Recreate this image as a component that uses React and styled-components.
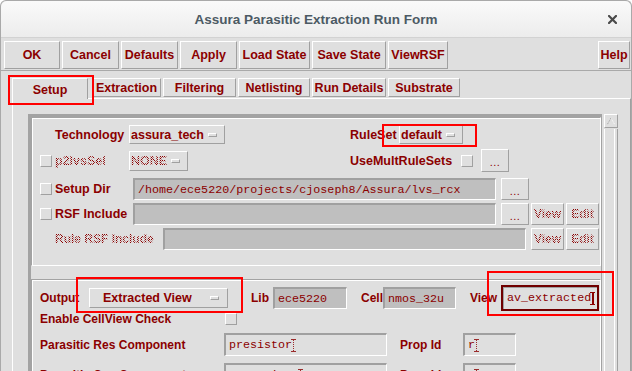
import styled, { createGlobalStyle, css } from "styled-components";

const RED = "#8b0000";
const BG = "#dfdfdf";
const SHADE = "#a0a0a0";

const GlobalStyle = createGlobalStyle`
  html, body { margin: 0; background: #ffffff; }
  body { font-family: "Liberation Sans", Arial, sans-serif; }
`;

const raised = css`
  border: 1px solid;
  border-color: #ffffff ${SHADE} ${SHADE} #ffffff;
`;

const sunken = css`
  border-style: solid;
  border-width: 2px 1px 1px 2px;
  border-color: ${SHADE} #ffffff #ffffff ${SHADE};
`;

const dither = css`
  color: transparent;
  background: repeating-conic-gradient(${RED} 0 25%, transparent 0 50%) 0 0 / 2px 2px;
  -webkit-background-clip: text;
  background-clip: text;
`;

const Window = styled.div`
  width: 632px;
  height: 371px;
  box-sizing: border-box;
  border: 1px solid #a9a9a9;
  border-bottom: none;
  border-radius: 6px 6px 0 0;
  background: ${BG};
  overflow: hidden;
  display: flex;
  flex-direction: column;
`;

const TitleBar = styled.div`
  height: 36px;
  flex: none;
  display: grid;
  grid-template-columns: 1fr auto 1fr;
  align-items: center;
  background: linear-gradient(#fafafa, #ececec);
  border-bottom: 1px solid #d2d2d2;
  border-radius: 6px 6px 0 0;
`;

const Title = styled.div`
  grid-column: 2;
  font-size: 13.5px;
  font-weight: bold;
  color: #4c5a64;
  white-space: nowrap;
`;

const Close = styled.div`
  grid-column: 3;
  justify-self: end;
  margin-right: 14px;
  display: flex;
`;

const Toolbar = styled.div`
  flex: none;
  display: flex;
  gap: 2px;
  padding: 3px 1px 1px 3px;
  border-bottom: 1px solid #a9a9a9;
`;

const ToolButton = styled.div`
  ${raised};
  box-sizing: border-box;
  width: ${(p) => p.$w}px;
  height: 28px;
  margin-left: ${(p) => (p.$push ? "auto" : "0")};
  display: flex;
  align-items: center;
  justify-content: center;
  font-size: 12.5px;
  font-weight: bold;
  color: ${RED};
  white-space: nowrap;
`;

const TabStrip = styled.div`
  flex: none;
  height: 27px;
  box-sizing: border-box;
  display: flex;
  align-items: flex-end;
  gap: 2px;
  padding: 7px 0 0 11px;
`;

const Tab = styled.div`
  ${raised};
  position: relative;
  box-sizing: border-box;
  width: ${(p) => p.$w}px;
  height: ${(p) => (p.$active ? 21 : 19)}px;
  margin-bottom: ${(p) => (p.$active ? -1 : 1)}px;
  margin-right: ${(p) => (p.$active ? 2 : 0)}px;
  ${(p) =>
    p.$active &&
    css`
      border-bottom: none;
      background: ${BG};
      z-index: 1;
      padding-top: 1px;
    `}
  display: flex;
  align-items: center;
  justify-content: center;
  font-size: 12.5px;
  font-weight: bold;
  color: ${RED};
  white-space: nowrap;
`;

const Annot = styled.span`
  position: absolute;
  left: ${(p) => p.$x}px;
  top: ${(p) => p.$y}px;
  width: ${(p) => p.$w}px;
  height: ${(p) => p.$h}px;
  box-sizing: border-box;
  border: 2px solid #ff0000;
  pointer-events: none;
  z-index: 5;
`;

const TabPage = styled.div`
  flex: 1;
  min-height: 0;
  display: flex;
  align-items: stretch;
  margin-left: 11px;
  border-top: 1px solid #ffffff;
  border-left: 1px solid #ffffff;
  border-right: 1px solid ${SHADE};
  padding: 15px 0 0 15px;
`;

const ScrollFrame = styled.div`
  width: 574px;
  flex: none;
  box-sizing: border-box;
  border-style: solid;
  border-width: 3px 1px 0 3px;
  border-color: #a3a3a3;
`;

const Scrollbar = styled.div`
  width: 14px;
  flex: none;
  margin-left: 2px;
  display: flex;
  flex-direction: column;
`;

const ArrowBox = styled.div`
  ${raised};
  height: 14px;
  box-sizing: border-box;
  display: flex;
  align-items: center;
  justify-content: center;
`;

const Trough = styled.div`
  flex: 1;
  margin-top: 1px;
  border-left: 1px solid #ffffff;
  border-right: 1px solid ${SHADE};
  box-shadow: inset -2px 0 0 ${BG}, inset -3px 0 0 #ffffff;
`;

const Group = styled.div`
  border: 1px solid;
  border-color: #a3a3a3 #ffffff #ffffff #a3a3a3;
  box-shadow: inset 1px 1px 0 #ffffff;
  margin-top: ${(p) => p.$top || 0}px;
  padding: ${(p) => p.$pt}px 0 ${(p) => p.$pb}px 8px;
`;

const Row = styled.div`
  display: flex;
  align-items: center;
  height: ${(p) => p.$h}px;
  margin-top: ${(p) => p.$mt || 0}px;
`;

const Half = styled.div`
  width: 310px;
  flex: none;
  display: flex;
  align-items: center;
`;

const Check = styled.span`
  ${raised};
  width: 12px;
  height: 12px;
  box-sizing: border-box;
  flex: none;
  margin-right: ${(p) => (p.$mr === undefined ? 3 : p.$mr)}px;
  visibility: ${(p) => (p.$hidden ? "hidden" : "visible")};
`;

const Label = styled.span`
  width: ${(p) => p.$w}px;
  flex: none;
  font-size: ${(p) => p.$size || 12.5}px;
  font-weight: bold;
  color: ${RED};
  white-space: nowrap;
  ${(p) => p.$dim && dither};
`;

const Combo = styled.span`
  ${raised};
  position: relative;
  display: inline-flex;
  align-items: center;
  box-sizing: border-box;
  flex: none;
  height: ${(p) => p.$h || 19}px;
  width: ${(p) => (p.$w ? `${p.$w}px` : "auto")};
  padding: ${(p) => (p.$w ? "0 8px 0 13px" : "0 7px 0 1px")};
  gap: 4px;
  justify-content: ${(p) => (p.$w ? "space-between" : "flex-start")};
  font-size: 12.5px;
  font-weight: bold;
  color: ${RED};
  white-space: nowrap;
`;

const ComboText = styled.span`
  ${(p) => p.$dim && dither};
`;

const ComboMark = styled.span`
  ${raised};
  width: 9px;
  height: 4px;
  box-sizing: border-box;
  flex: none;
`;

const Field = styled.span`
  ${sunken};
  position: relative;
  display: flex;
  align-items: center;
  box-sizing: border-box;
  flex: none;
  width: ${(p) => p.$w}px;
  height: ${(p) => p.$h || 22}px;
  padding-left: 3px;
  background: ${(p) => (p.$dark ? "#bfbfbf" : "transparent")};
  font-family: "Liberation Mono", "Courier New", monospace;
  font-size: 11.7px;
  color: ${RED};
  white-space: nowrap;
  ${(p) =>
    p.$focus &&
    css`
      border: 2px solid #700000;
      box-shadow: inset 1px 1px 0 ${SHADE};
      padding-left: 4px;
    `}
`;

const Caret = styled.span`
  display: inline-block;
  width: 5px;
  height: 13px;
  box-sizing: border-box;
  flex: none;
  margin-left: -1px;
  border-top: 1px solid ${RED};
  border-bottom: 1px solid ${RED};
  background: ${(p) =>
      p.$solid
        ? `linear-gradient(${RED}, ${RED})`
        : `repeating-linear-gradient(to bottom, ${RED} 0 1px, transparent 1px 2px)`}
    center / ${(p) => (p.$solid ? 2 : 1)}px 100% no-repeat;
  opacity: ${(p) => (p.$solid ? 1 : 0.8)};
`;

const SmallButton = styled.span`
  ${raised};
  box-sizing: border-box;
  flex: none;
  width: ${(p) => p.$w}px;
  height: ${(p) => p.$h || 22}px;
  margin-left: ${(p) => p.$ml || 0}px;
  display: flex;
  align-items: center;
  justify-content: center;
  font-size: 12px;
  font-weight: bold;
  color: ${RED};
  ${(p) => p.$dim && dither};
`;

const Dots = styled.span`
  font-weight: normal;
  font-size: 11px;
  padding-top: 3px;
  letter-spacing: 0.5px;
`;

const Gap = styled.span`
  width: ${(p) => p.$w}px;
  flex: none;
`;

function CloseIcon() {
  return (
    <svg width="9" height="9" viewBox="0 0 9 9">
      <path d="M1 1L8 8M8 1L1 8" stroke="#4a4a4a" strokeWidth="2.2" strokeLinecap="square" />
    </svg>
  );
}

function UpArrow() {
  return (
    <svg width="10" height="9" viewBox="0 0 10 9">
      <path d="M5 1L9 8" stroke="#ffffff" strokeWidth="1" strokeDasharray="1 1" />
      <path d="M5 1L1 8" stroke="#9a9a9a" strokeWidth="1" strokeDasharray="1 1" />
    </svg>
  );
}

const buttons = [
  ["OK", 56],
  ["Cancel", 57],
  ["Defaults", 57],
  ["Apply", 57],
  ["Load State", 71],
  ["Save State", 74],
  ["ViewRSF", 60],
];

const tabs = [
  ["Extraction", 69],
  ["Filtering", 73],
  ["Netlisting", 72],
  ["Run Details", 74],
  ["Substrate", 72],
];

export default function App() {
  return (
    <>
      <GlobalStyle />
      <Window>
        <TitleBar>
          <Title>Assura Parasitic Extraction Run Form</Title>
          <Close>
            <CloseIcon />
          </Close>
        </TitleBar>

        <Toolbar>
          {buttons.map(([label, w]) => (
            <ToolButton key={label} $w={w}>
              {label}
            </ToolButton>
          ))}
          <ToolButton $w={32} $push>
            Help
          </ToolButton>
        </Toolbar>

        <TabStrip>
          <Tab $w={76} $active>
            Setup
            <Annot $x={-5} $y={-4} $w={86} $h={30} />
          </Tab>
          {tabs.map(([label, w]) => (
            <Tab key={label} $w={w}>
              {label}
            </Tab>
          ))}
        </TabStrip>

        <TabPage>
          <ScrollFrame>
            <Group $pt={6} $pb={15}>
              <Row $h={21}>
                <Half>
                  <Check $hidden />
                  <Label $w={74}>Technology</Label>
                  <Combo>
                    assura_tech
                    <ComboMark />
                  </Combo>
                </Half>
                <Label $w={49}>RuleSet</Label>
                <Combo>
                  default
                  <ComboMark />
                  <Annot $x={-18} $y={-2} $w={95} $h={23} />
                </Combo>
              </Row>

              <Row $h={23} $mt={4}>
                <Half>
                  <Check />
                  <Label $w={74} $dim>
                    p2lvsSel
                  </Label>
                  <Combo $h={20}>
                    <ComboText $dim>NONE</ComboText>
                    <ComboMark />
                  </Combo>
                </Half>
                <Label $w={111}>UseMultRuleSets</Label>
                <Check $mr={8} />
                <SmallButton $w={28} $h={23}>
                  <Dots>...</Dots>
                </SmallButton>
              </Row>

              <Row $h={22} $mt={6}>
                <Check />
                <Label $w={78}>Setup Dir</Label>
                <Field $w={363} $dark>
                  /home/ece5220/projects/cjoseph8/Assura/lvs_rcx
                </Field>
                <SmallButton $w={28} $ml={5}>
                  <Dots>...</Dots>
                </SmallButton>
              </Row>

              <Row $h={22} $mt={3}>
                <Check />
                <Label $w={78}>RSF Include</Label>
                <Field $w={363} $dark />
                <SmallButton $w={28} $ml={5}>
                  <Dots>...</Dots>
                </SmallButton>
                <SmallButton $w={33} $ml={2} $dim>
                  View
                </SmallButton>
                <SmallButton $w={33} $ml={2} $dim>
                  Edit
                </SmallButton>
              </Row>

              <Row $h={22} $mt={3}>
                <Check $hidden />
                <Label $w={108} $size={12} $dim>
                  Rule RSF Include
                </Label>
                <Field $w={363} $dark />
                <SmallButton $w={33} $ml={5} $dim>
                  View
                </SmallButton>
                <SmallButton $w={33} $ml={2} $dim>
                  Edit
                </SmallButton>
              </Row>
            </Group>

            <Group $top={13} $pt={5} $pb={0}>
              <Row $h={26}>
                <Label $w={49} $size={12}>
                  Output
                </Label>
                <Combo $w={139} $h={20}>
                  Extracted View
                  <ComboMark />
                  <Annot $x={-14} $y={-12} $w={167} $h={36} />
                </Combo>
                <Gap $w={23} />
                <Label $w={22} $size={12}>
                  Lib
                </Label>
                <Field $w={74} $dark>
                  ece5220
                </Field>
                <Gap $w={14} />
                <Label $w={22} $size={12}>
                  Cell
                </Label>
                <Field $w={73} $dark>
                  nmos_32u
                </Field>
                <Gap $w={14} />
                <Label $w={31} $size={12}>
                  View
                </Label>
                <Field $w={98} $h={26} $focus>
                  av_extracted
                  <Caret $solid />
                  <Annot $x={-16} $y={-16} $w={127} $h={45} />
                </Field>
              </Row>

              <Row $h={13} $mt={1}>
                <Label $w={185} $size={12}>
                  Enable CellView Check
                </Label>
                <Check />
              </Row>

              <Row $h={23} $mt={8}>
                <Label $w={184} $size={12}>
                  Parasitic Res Component
                </Label>
                <Field $w={163} $h={23}>
                  presistor
                  <Caret />
                </Field>
                <Gap $w={13} />
                <Label $w={63} $size={12}>
                  Prop Id
                </Label>
                <Field $w={53} $h={23}>
                  r
                  <Caret />
                </Field>
              </Row>

              <Row $h={23} $mt={7}>
                <Label $w={184} $size={12}>
                  Parasitic Cap Component
                </Label>
                <Field $w={163} $h={23}>
                  pcapacitor
                  <Caret />
                </Field>
                <Gap $w={13} />
                <Label $w={63} $size={12}>
                  Prop Id
                </Label>
                <Field $w={53} $h={23}>
                  c
                  <Caret />
                </Field>
              </Row>
            </Group>
          </ScrollFrame>

          <Scrollbar>
            <ArrowBox>
              <UpArrow />
            </ArrowBox>
            <Trough />
          </Scrollbar>
        </TabPage>
      </Window>
    </>
  );
}
